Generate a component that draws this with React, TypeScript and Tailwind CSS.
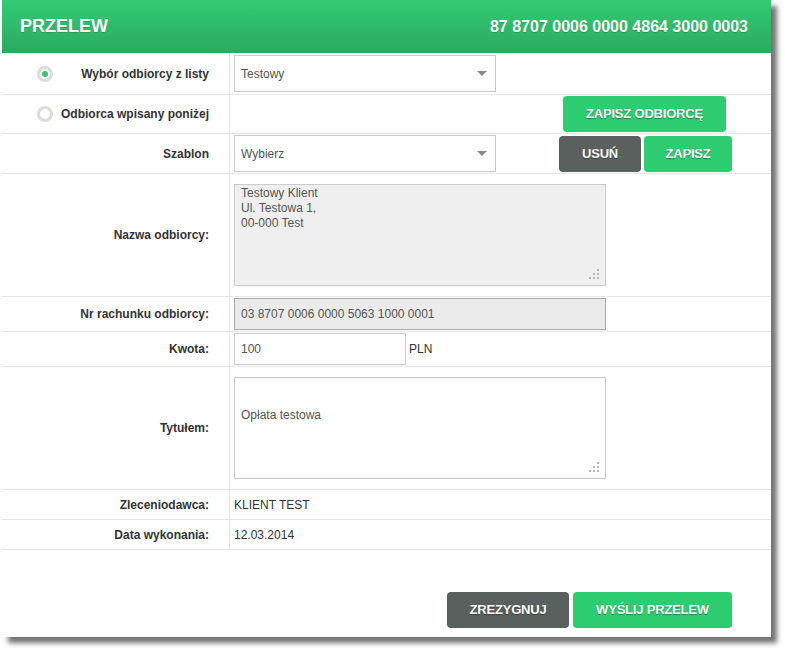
import React from "react";

const font = { fontFamily: '"Liberation Sans", Arial, sans-serif' };

function Radio({ checked }: { checked?: boolean }) {
  return (
    <div className="w-4 h-4 rounded-full border-[3px] border-[#dcdcdc] bg-white flex items-center justify-center shrink-0">
      {checked && <div className="w-[6px] h-[6px] rounded-full bg-[#2ecc71]" />}
    </div>
  );
}

function Select({ value }: { value: string }) {
  return (
    <div className="w-[262px] h-[37px] border border-[#cccccc] bg-white flex items-center justify-between pl-[6px] pr-[8px] text-[12px] text-[#555]">
      <span>{value}</span>
      <svg width="10" height="6" viewBox="0 0 10 6">
        <path d="M0 0 L10 0 L5 5 Z" fill="#888" />
      </svg>
    </div>
  );
}

function Grip() {
  return (
    <svg className="absolute right-[6px] bottom-[6px]" width="10" height="10" viewBox="0 0 10 10">
      <rect x="8" y="0" width="2" height="2" fill="#b5b5b5" />
      <rect x="4" y="4" width="2" height="2" fill="#b5b5b5" />
      <rect x="8" y="4" width="2" height="2" fill="#b5b5b5" />
      <rect x="0" y="8" width="2" height="2" fill="#b5b5b5" />
      <rect x="4" y="8" width="2" height="2" fill="#b5b5b5" />
      <rect x="8" y="8" width="2" height="2" fill="#b5b5b5" />
    </svg>
  );
}

function Btn({ children, dark, w }: { children: React.ReactNode; dark?: boolean; w: string }) {
  return (
    <div
      className={
        "h-[36px] rounded-[4px] flex items-center justify-center text-white font-bold text-[13px] tracking-[-0.2px] [text-shadow:0_1px_1px_rgba(0,0,0,0.35)] " +
        (dark ? "bg-[#5a605d] " : "bg-[#2ecc71] ") +
        w
      }
    >
      {children}
    </div>
  );
}

function Row({
  h,
  label,
  children,
  left,
}: {
  h: string;
  label?: React.ReactNode;
  children?: React.ReactNode;
  left?: React.ReactNode;
}) {
  return (
    <div className={"flex border-b border-[#e6e6e6] " + h}>
      <div className="w-[228px] border-r border-[#e6e6e6] flex items-center pr-[20px] shrink-0">
        {left}
        <div className="flex-1 text-right font-bold text-[12px] text-[#333]">{label}</div>
      </div>
      <div className="flex-1 flex items-center pl-[4px] text-[12px] text-[#333]">{children}</div>
    </div>
  );
}

export default function App() {
  return (
    <div className="w-[785px] h-[652px] bg-white" style={font}>
      <div className="ml-[2px] w-[769px] h-[637px] bg-white shadow-[6px_6px_5px_rgba(0,0,0,0.55)] flex flex-col">
        <div className="h-[53px] bg-linear-to-b from-[#34cb74] to-[#29ab5e] flex items-center justify-between pl-[18px] pr-[23px] text-white font-bold [text-shadow:0_1px_1px_rgba(0,0,0,0.15)]">
          <span className="text-[18px]">PRZELEW</span>
          <span className="text-[16px]">87 8707 0006 0000 4864 3000 0003</span>
        </div>

        <Row
          h="h-[42px]"
          left={
            <div className="pl-[35px]">
              <Radio checked />
            </div>
          }
          label="Wybór odbiorcy z listy"
        >
          <Select value="Testowy" />
        </Row>

        <Row
          h="h-[39px]"
          left={
            <div className="pl-[35px]">
              <Radio />
            </div>
          }
          label="Odbiorca wpisany poniżej"
        >
          <div className="ml-[329px]">
            <Btn w="w-[163px]">ZAPISZ ODBIORCĘ</Btn>
          </div>
        </Row>

        <Row h="h-[40px]" label="Szablon">
          <Select value="Wybierz" />
          <div className="ml-[63px] flex gap-[3px]">
            <Btn dark w="w-[82px]">USUŃ</Btn>
            <Btn w="w-[88px]">ZAPISZ</Btn>
          </div>
        </Row>

        <Row h="h-[123px]" label="Nazwa odbiorcy:">
          <div className="relative w-[372px] h-[102px] border border-[#cccccc] bg-[#efefef] pl-[6px] pt-[1px] text-[12px] leading-[15px] text-[#555]">
            <div>Testowy Klient</div>
            <div>Ul. Testowa 1,</div>
            <div>00-000 Test</div>
            <Grip />
          </div>
        </Row>

        <Row h="h-[35px]" label="Nr rachunku odbiorcy:">
          <div className="w-[372px] h-[32px] border border-[#a9a9a9] bg-[#ebebeb] pl-[6px] flex items-center text-[12px] text-[#555]">
            03 8707 0006 0000 5063 1000 0001
          </div>
        </Row>

        <Row h="h-[35px]" label="Kwota:">
          <div className="w-[172px] h-[32px] border border-[#cccccc] bg-white pl-[6px] flex items-center text-[12px] text-[#555]">
            100
          </div>
          <span className="ml-[3px] text-[12px] text-[#333]">PLN</span>
        </Row>

        <Row h="h-[123px]" label="Tytułem:">
          <div className="relative w-[372px] h-[102px] border border-[#cccccc] bg-white pl-[6px] pt-[30px] text-[12px] leading-[15px] text-[#555]">
            <div>Opłata testowa</div>
            <Grip />
          </div>
        </Row>

        <Row h="h-[30px]" label="Zleceniodawca:">
          <span>KLIENT TEST</span>
        </Row>

        <Row h="h-[30px]" label="Data wykonania:">
          <span>12.03.2014</span>
        </Row>

        <div className="flex-1 flex items-end justify-end pr-[39px] pb-[9px] gap-[4px]">
          <Btn dark w="w-[122px]">ZREZYGNUJ</Btn>
          <Btn w="w-[159px]">WYŚLIJ PRZELEW</Btn>
        </div>
      </div>
    </div>
  );
}
